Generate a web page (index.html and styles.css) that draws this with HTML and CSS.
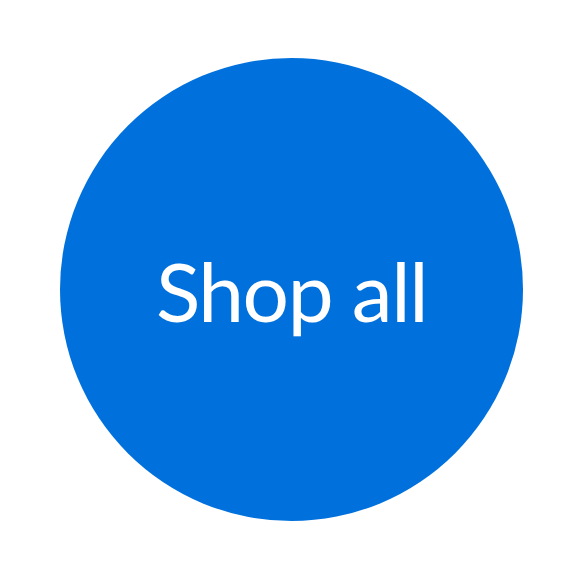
FILE: index.html
```html
<!DOCTYPE html>
<html>
<head>
<meta charset="utf-8">
<link rel="stylesheet" href="styles.css">
</head>
<body>
<div class="page">
  <a class="circle" href="#">Shop all</a>
</div>
</body>
</html>
```
FILE: styles.css
```css
html, body { margin: 0; background: #fff; }
.page {
  width: 580px;
  height: 580px;
  padding: 58px 0 0 60px;
  box-sizing: border-box;
}
.circle {
  display: flex;
  align-items: center;
  justify-content: center;
  width: 463px;
  height: 463px;
  border-radius: 50%;
  background: #0071dc;
  color: #fff;
  text-decoration: none;
  font-family: Lato, "Open Sans", sans-serif;
  font-weight: 400;
  font-size: 82px;
  letter-spacing: -1.4px;
}
```
